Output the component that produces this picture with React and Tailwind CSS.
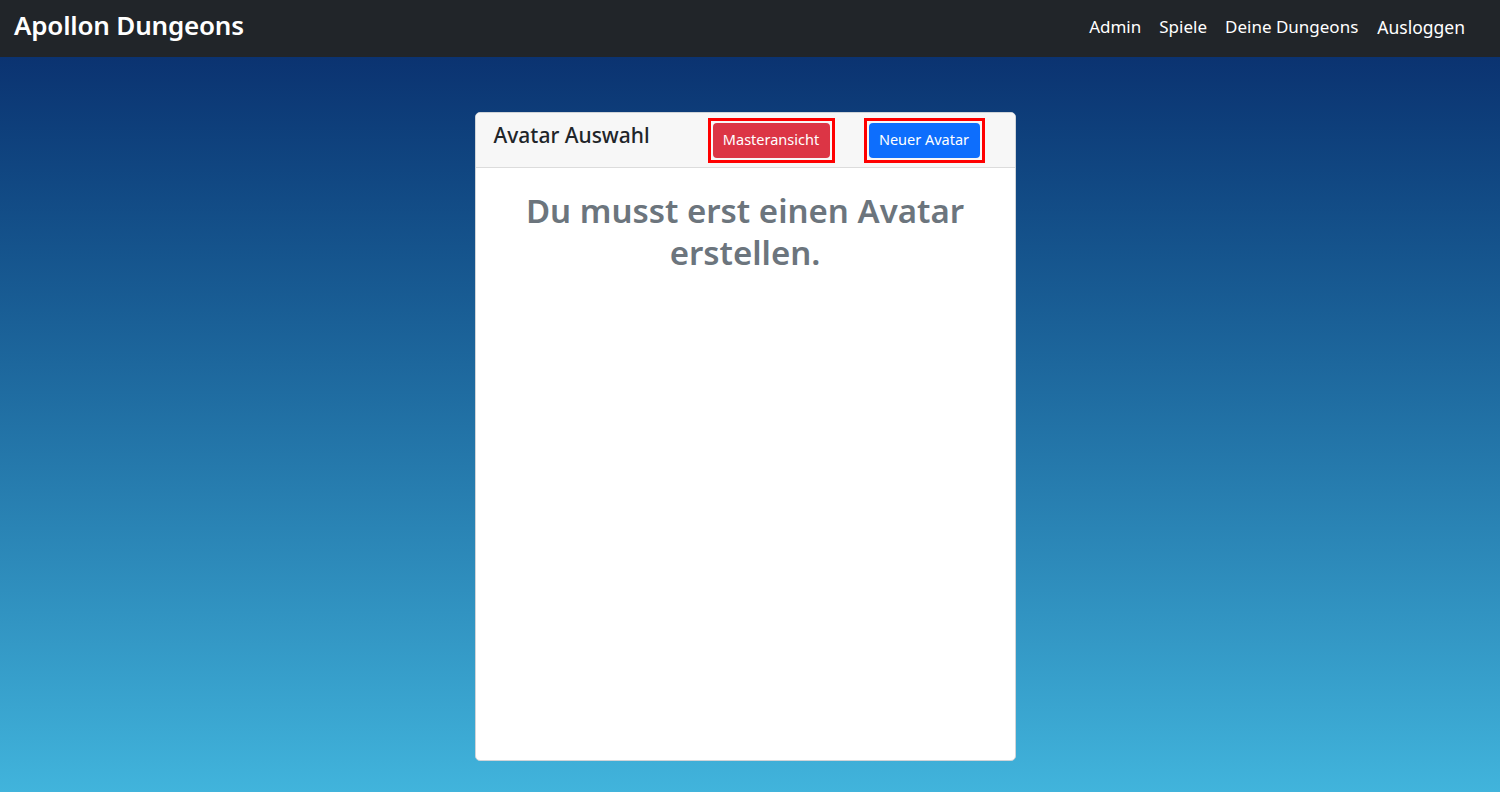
import React from 'react';

const font = { fontFamily: '"Noto Sans", "Open Sans", sans-serif' };

const Navbar = () => {
  return (
    <header className="bg-[#212529] h-[57px] flex items-center justify-between pl-[14px] pr-[35px]">
      <h1 className="text-[26px] font-semibold text-white tracking-[-0.2px] -mt-[6px]">Apollon Dungeons</h1>
      <nav className="flex items-center text-[17px] text-white -mt-[3px]">
        <a className="mr-[18px]">Admin</a>
        <a className="mr-[18px]">Spiele</a>
        <a className="mr-[19px]">Deine Dungeons</a>
        <a className="text-[17.5px]">Ausloggen</a>
      </nav>
    </header>
  );
};

const App = () => {
  return (
    <div style={font} className="min-h-[792px] flex flex-col">
      <Navbar />
      <main className="flex-1 bg-gradient-to-b from-[#0b3371] to-[#41b4dc] flex justify-center pt-[55px] pb-[31px] pr-[10px]">
        <div className="w-[541px] bg-white rounded-[5px] border border-[#d0d4d8] flex flex-col overflow-hidden">
          <div className="h-[55px] bg-[#f7f7f7] border-b border-[#dcdcdc] flex items-center pl-[18px]">
            <span className="text-[21px] font-medium text-[#212529] -mt-[8px] w-[214px]">Avatar Auswahl</span>
            <div className="border-[3px] border-[#ff0000] p-[2px]">
              <button className="bg-[#dc3545] text-white text-[14.5px] h-[35px] w-[117px] rounded-[4px]">Masteransicht</button>
            </div>
            <div className="border-[3px] border-[#ff0000] p-[2px] ml-[29px]">
              <button className="bg-[#0d6efd] text-white text-[14.5px] h-[35px] w-[111px] rounded-[4px]">Neuer Avatar</button>
            </div>
          </div>
          <div className="flex-1 px-[40px] pt-[22px]">
            <p className="text-center text-[33px] font-semibold text-[#6c757d] leading-[42px]">
              Du musst erst einen Avatar erstellen.
            </p>
          </div>
        </div>
      </main>
    </div>
  );
};

export default App;
